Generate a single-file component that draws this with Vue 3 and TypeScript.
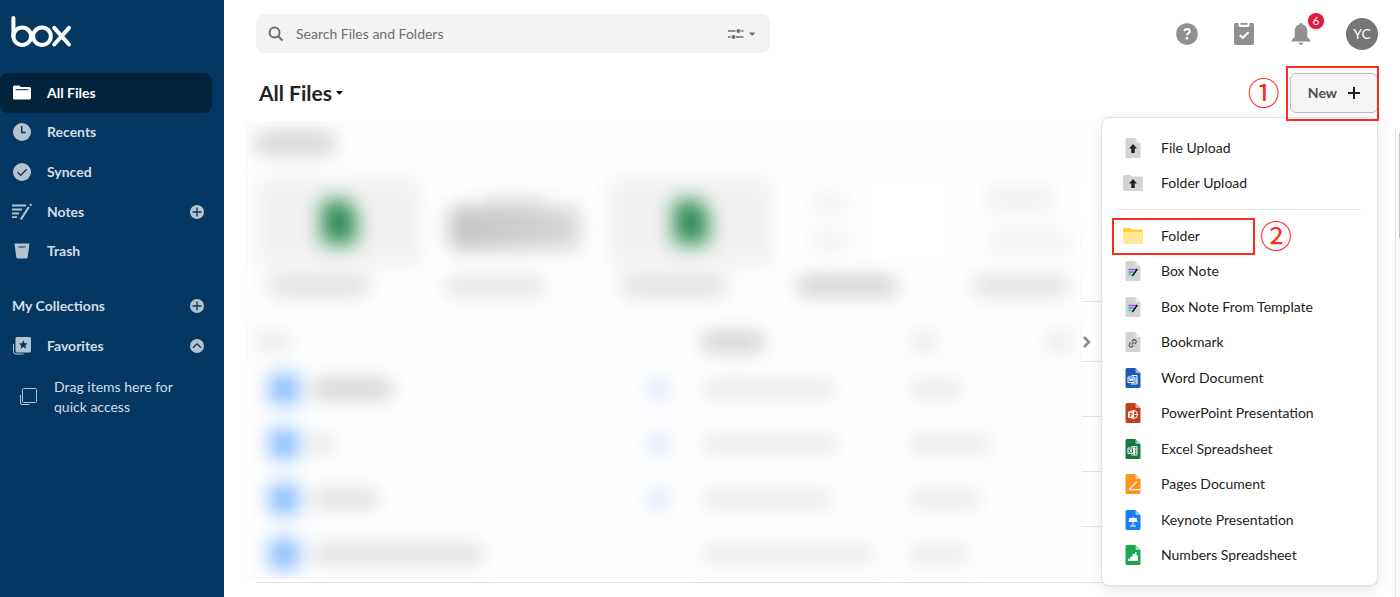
<script setup lang="ts">
import { ref } from 'vue'

interface NavItem {
  id: string
  label: string
  active?: boolean
  addable?: boolean
}

interface MenuItem {
  id: string
  label: string
  color?: string
}

const query = ref('')
const menuOpen = ref(true)
const favoritesOpen = ref(true)

const navItems: NavItem[] = [
  { id: 'files', label: 'All Files', active: true },
  { id: 'recents', label: 'Recents' },
  { id: 'synced', label: 'Synced' },
  { id: 'notes', label: 'Notes', addable: true },
  { id: 'trash', label: 'Trash' },
]

const uploadItems: MenuItem[] = [
  { id: 'file-upload', label: 'File Upload', color: '#d3d3d3' },
  { id: 'folder-upload', label: 'Folder Upload' },
]

const createItems: MenuItem[] = [
  { id: 'folder', label: 'Folder' },
  { id: 'note', label: 'Box Note', color: '#d3d3d3' },
  { id: 'note-template', label: 'Box Note From Template', color: '#d3d3d3' },
  { id: 'bookmark', label: 'Bookmark', color: '#d3d3d3' },
  { id: 'word', label: 'Word Document', color: '#185abd' },
  { id: 'powerpoint', label: 'PowerPoint Presentation', color: '#c43e1c' },
  { id: 'excel', label: 'Excel Spreadsheet', color: '#17793f' },
  { id: 'pages', label: 'Pages Document', color: '#ff9322' },
  { id: 'keynote', label: 'Keynote Presentation', color: '#147efb' },
  { id: 'numbers', label: 'Numbers Spreadsheet', color: '#1aa751' },
]

const menuGroups: MenuItem[][] = [uploadItems, createItems]

const cards = [
  { kind: 'sheet', label: 98, tone: '#d8d8d8' },
  { kind: 'photo', label: 98, tone: '#dedede' },
  { kind: 'sheet', label: 104, tone: '#d8d8d8' },
  { kind: 'page', label: 98, tone: '#c6c6c6' },
  { kind: 'chart', label: 94, tone: '#dadada' },
]

const rows = [
  { name: 78, tone: '#c8c8c8', synced: true, updated: 132, size: 52 },
  { name: 18, tone: '#dadada', synced: true, updated: 134, size: 80 },
  { name: 64, tone: '#d8d8d8', synced: true, updated: 128, size: 70 },
  { name: 170, tone: '#dadada', synced: false, updated: 170, size: 58 },
]
</script>

<template>
  <div class="app">
    <aside class="sidebar">
      <a class="logo" href="#" aria-label="Box">
        <svg width="62" height="33" viewBox="0 0 62 33" fill="none" stroke="#fff" stroke-width="4" stroke-linecap="round">
          <path d="M2.400 3v18" />
          <circle cx="11.200" cy="21.200" r="8.800" />
          <circle cx="31" cy="21.200" r="8.800" />
          <path d="M43.200 12.800 58 29.500M58 12.800 43.200 29.500" />
        </svg>
      </a>

      <nav class="nav" aria-label="Main">
        <div v-for="item in navItems" :key="item.id" class="nav-row" :class="{ active: item.active }">
          <a class="nav-link" href="#">
            <svg v-if="item.id === 'files'" width="20" height="20" viewBox="0 0 20 20">
              <path fill="currentColor" d="M1 4a1.500 1.500 0 0 1 1.500-1.500h4.800L9 4h8.500A1.500 1.500 0 0 1 19 5.500v9.500a1.500 1.500 0 0 1-1.500 1.500h-15A1.500 1.500 0 0 1 1 15z" />
              <path stroke="#02233c" stroke-linecap="round" d="M4 6.700h12" />
            </svg>
            <svg v-else-if="item.id === 'recents'" width="20" height="20" viewBox="0 0 20 20">
              <circle cx="10" cy="10" r="9" fill="currentColor" />
              <path fill="none" stroke="#043862" stroke-width="1.500" d="M9.700 4v6.500h4" />
            </svg>
            <svg v-else-if="item.id === 'synced'" width="20" height="20" viewBox="0 0 20 20">
              <circle cx="10" cy="10" r="9" fill="currentColor" />
              <path fill="none" stroke="#043862" stroke-width="1.300" d="m5.500 10.300 3.200 3 6-6" />
            </svg>
            <svg v-else-if="item.id === 'notes'" width="20" height="20" viewBox="0 0 20 20" fill="none" stroke="currentColor" stroke-width="1.800">
              <path d="M0 3.500h14M0 7.500h10M0 11.500h7M0 15.200h5" />
              <path stroke-width="2.200" d="m16.800 5-8 12.500M18.200 3.600l1-1.500" />
            </svg>
            <svg v-else width="20" height="20" viewBox="0 0 20 20">
              <path fill="currentColor" d="M2.500 2.500h15l-1.800 13.700a1.500 1.500 0 0 1-1.500 1.300H5.800a1.500 1.500 0 0 1-1.500-1.300z" />
              <path stroke="#043862" d="M6.500 6h7" />
            </svg>
            <span>{{ item.label }}</span>
          </a>
          <button v-if="item.addable" class="round" type="button" aria-label="Create note">
            <svg width="14" height="14" viewBox="0 0 14 14">
              <circle cx="7" cy="7" r="7" fill="currentColor" />
              <path stroke="#043862" stroke-width="1.300" d="M7 2.500v9M2.500 7h9" />
            </svg>
          </button>
        </div>
      </nav>

      <section class="collections">
        <div class="nav-row">
          <h2>My Collections</h2>
          <button class="round" type="button" aria-label="Add collection">
            <svg width="14" height="14" viewBox="0 0 14 14">
              <circle cx="7" cy="7" r="7" fill="currentColor" />
              <path stroke="#043862" stroke-width="1.300" d="M7 2.500v9M2.500 7h9" />
            </svg>
          </button>
        </div>
        <div class="nav-row">
          <a class="nav-link" href="#">
            <svg width="20" height="20" viewBox="0 0 20 20">
              <path fill="none" stroke="currentColor" d="M1.500 8v7.500A2.500 2.500 0 0 0 4 18h7.500" />
              <rect x="3.500" y="1" width="15.500" height="15.500" rx="1.500" fill="currentColor" />
              <path fill="#043862" d="m11.300 4.300 1.300 2.900 3.100.3-2.300 2.100.7 3.100-2.800-1.600-2.700 1.600.6-3.100-2.300-2.100 3.100-.3z" />
            </svg>
            <span>Favorites</span>
          </a>
          <button class="round" type="button" aria-label="Toggle favorites" @click="favoritesOpen = !favoritesOpen">
            <svg width="14" height="14" viewBox="0 0 14 14">
              <circle cx="7" cy="7" r="7" fill="currentColor" />
              <path fill="none" stroke="#043862" stroke-width="1.300" d="m3 8.800 4-4 4 4" />
            </svg>
          </button>
        </div>
        <p v-if="favoritesOpen" class="drop-hint">
          <svg width="20" height="20" viewBox="0 0 20 20" fill="none" stroke="currentColor">
            <rect x="4.500" y="1.500" width="14" height="14" rx="1" />
            <path d="M2.500 8v8A1.500 1.500 0 0 0 4 17.500h7.500" />
          </svg>
          <span>Drag items here for<br />quick access</span>
        </p>
      </section>
    </aside>

    <main class="main">
      <header class="topbar">
        <form class="search" role="search" @submit.prevent>
          <svg width="16" height="16" viewBox="0 0 16 16" fill="none" stroke="#6f6f6f" stroke-width="2">
            <circle cx="6.500" cy="6.500" r="5" />
            <path d="m10.200 10.200 4.300 4.300" />
          </svg>
          <input v-model="query" type="text" aria-label="Search Files and Folders" placeholder="Search Files and Folders" />
          <button class="filters" type="button" aria-label="Search filters">
            <svg width="28" height="12" viewBox="0 0 28 12" fill="#6f6f6f">
              <path fill="none" stroke="#6f6f6f" stroke-width="1.600" d="M0 3h7.500M13.500 3h2M0 9h2.500M8 9h7.500" />
              <circle cx="10.500" cy="3" r="2" />
              <circle cx="5.500" cy="9" r="2" />
              <path d="M21 4.500h6.500L24.200 8z" />
            </svg>
          </button>
        </form>

        <div class="tools">
          <button type="button" aria-label="Help">
            <svg width="22" height="22" viewBox="0 0 22 22">
              <circle cx="11" cy="11" r="10.800" fill="#909090" />
              <path fill="none" stroke="#fff" stroke-width="2" d="M8.200 8.200c.5-1.700 1.600-2.300 2.900-2.300 1.700 0 2.700.9 2.700 2.200 0 1.900-2.500 2.100-2.700 4.300" />
              <circle cx="11" cy="15.300" r="1.300" fill="#fff" />
            </svg>
          </button>
          <button type="button" aria-label="Tasks">
            <svg width="22" height="22" viewBox="0 0 22 22">
              <path fill="#909090" d="M2.500 0h3v2.500A1.500 1.500 0 0 0 7 4h8a1.500 1.500 0 0 0 1.500-1.500V0h3A1.500 1.500 0 0 1 21 1.500v18.500a2 2 0 0 1-2 2H3a2 2 0 0 1-2-2V1.500A1.500 1.500 0 0 1 2.500 0z" />
              <path fill="#909090" d="M7.500 0h7v1.800h-7z" />
              <path fill="none" stroke="#fff" stroke-width="2" d="m6.800 12 3 2.800 5.700-5.600" />
            </svg>
          </button>
          <button type="button" aria-label="Notifications">
            <svg width="22" height="22" viewBox="0 0 22 22" fill="#909090">
              <path d="M11 0c1 0 1.500.6 1.500 1.500 3 .7 4.800 3 4.800 6.200v6.500l3.200 3.300v1h-19v-1l3.200-3.300V7.700c0-3.200 1.800-5.500 4.800-6.200C9.500.6 10 0 11 0z" />
              <path d="M8.500 19.700h5c-.5 1.400-1.400 2-2.500 2s-2-.6-2.500-2z" />
            </svg>
            <span class="badge">6</span>
          </button>
          <button class="avatar" type="button" aria-label="Account">YC</button>
        </div>
      </header>

      <div class="heading">
        <h1>
          <button type="button">
            All Files
            <svg width="8" height="4" viewBox="0 0 8 4"><path d="M0 0h7L3.500 3.800z" /></svg>
          </button>
        </h1>
        <div class="new-wrap">
          <span class="callout callout-one">①</span>
          <button class="new" type="button" aria-haspopup="menu" :aria-expanded="menuOpen" @click="menuOpen = !menuOpen">
            New
            <svg width="14" height="14" viewBox="0 0 14 14" stroke="#222" stroke-width="2"><path d="M7 1v12M1 7h12" /></svg>
          </button>
          <span class="marker marker-new"></span>

          <div v-if="menuOpen" class="menu">
            <ul v-for="(group, g) in menuGroups" :key="g" role="menu" :class="g === 0 ? 'uploads' : 'creates'">
              <li v-for="item in group" :key="item.id" role="none">
                <button type="button" role="menuitem">
                  <svg v-if="item.color" width="20" height="20" viewBox="0 0 20 20">
                    <path :fill="item.color" d="M4 0h8.500l5 5v13.500a1.500 1.500 0 0 1-1.500 1.500H4a1.500 1.500 0 0 1-1.500-1.500v-17A1.500 1.500 0 0 1 4 0z" />
                    <path fill="#fff" fill-opacity=".55" d="m12.500 0 5 5h-4a1 1 0 0 1-1-1z" />
                    <path v-if="item.id === 'file-upload'" fill="#222" d="m10 6 4 4.500h-2.300V15H8.300v-4.500H6z" />
                    <template v-else-if="item.id === 'note' || item.id === 'note-template'">
                      <path stroke="#9f4bdb" stroke-width="1.400" d="M5.500 8.500h8" />
                      <path stroke="#2486fc" stroke-width="1.400" d="M5.500 11h5" />
                      <path stroke="#26c9c9" stroke-width="1.400" d="M5.500 13.500h3" />
                      <path stroke="#111" stroke-width="1.500" d="m14.300 8-5 7" />
                    </template>
                    <g v-else-if="item.id === 'bookmark'" fill="none" stroke="#444" stroke-width="1" transform="rotate(-45 9.500 11.500)">
                      <path d="M9 9.500H7.500a2 2 0 0 0 0 4H9M10.500 9.500H12a2 2 0 0 1 0 4h-1.500M8 11.500h3.500" />
                    </g>
                    <g v-else-if="item.id === 'word'" fill="none" stroke="#fff">
                      <path d="M8.500 7.500h5.500v8.500H8M11.500 10h2.500M11.500 12h2.500M11.500 14h2.500" />
                      <path fill="#185abd" d="M5 9h6v5.500H5z" />
                      <path d="m6.300 10 .8 3 1-2.500.9 2.500.9-3" />
                    </g>
                    <g v-else-if="item.id === 'powerpoint'" fill="none" stroke="#fff">
                      <circle cx="10.500" cy="11.500" r="4" />
                      <path d="M10.500 7.500v4h4" />
                      <path fill="#fff" d="M5.500 9h5v5.500h-5z" />
                      <path stroke="#c43e1c" d="M7.200 14v-4h1a1 1 0 0 1 0 2.200h-1" />
                    </g>
                    <g v-else-if="item.id === 'excel'" fill="none" stroke="#fff">
                      <path d="M8.500 7.500h5.500v8.500H8.500M11.500 7.500V16M8 10.200h6M8 13h6" />
                      <path fill="#17793f" d="M5 9h5.500v5.500H5z" />
                      <path d="m6.500 10 2.600 3.500M9.100 10l-2.600 3.500" />
                    </g>
                    <g v-else-if="item.id === 'pages'" fill="none" stroke="#fff">
                      <path stroke-width="1.200" d="m7 14.700 6.800-6.800M6 15.700h11.500" />
                      <path d="M6.200 15.500 7 14" />
                    </g>
                    <g v-else-if="item.id === 'keynote'" fill="#fff">
                      <path d="M6.300 8h7.400l.8 4h-9z" />
                      <path d="M9.500 7h1v9h-1zM7 15.500h6v1H7z" />
                    </g>
                    <path v-else-if="item.id === 'numbers'" fill="#fff" d="M5 13.700h2.200v-2h2.300V9h2.500V7h1.500v3.500H15V16H5z" />
                  </svg>
                  <svg v-else width="20" height="20" viewBox="0 0 20 20">
                    <template v-if="item.id === 'folder-upload'">
                      <path fill="#d3d3d3" d="M0 3.500A1.500 1.500 0 0 1 1.500 2h5.700L9 3.500h9.500A1.500 1.500 0 0 1 20 5v11.500a1.500 1.500 0 0 1-1.500 1.500h-17A1.500 1.500 0 0 1 0 16.500z" />
                      <path fill="#222" d="m10 6 4 4.500h-2.300V15H8.300v-4.500H6z" />
                    </template>
                    <template v-else>
                      <path fill="#fcd22f" d="M0 3.500A1.500 1.500 0 0 1 1.500 2h5.700L9 3.500h9.500A1.500 1.500 0 0 1 20 5v5H0z" />
                      <path fill="#ffe996" d="M0 7.500A1.500 1.500 0 0 1 1.500 6h17A1.500 1.500 0 0 1 20 7.500v9a1.500 1.500 0 0 1-1.500 1.500h-17A1.500 1.500 0 0 1 0 16.500z" />
                    </template>
                  </svg>
                  <span>{{ item.label }}</span>
                </button>
                <template v-if="item.id === 'folder'">
                  <span class="marker marker-folder"></span>
                  <span class="callout callout-two">②</span>
                </template>
              </li>
            </ul>
          </div>
        </div>
      </div>

      <div class="body">
        <div class="content">
          <div class="veil" aria-hidden="true">
            <div class="blurred">
              <div class="title-bar"></div>
              <div class="cards">
                <div v-for="(card, i) in cards" :key="i" class="card">
                  <div class="thumb" :class="card.kind"><i></i><b></b></div>
                  <div class="bar" :style="{ width: card.label + 'px', background: card.tone }"></div>
                </div>
              </div>
              <div class="row head">
                <div class="bar faint short"></div>
                <div></div>
                <div></div>
                <div class="bar strong"></div>
                <div class="bar faint tiny"></div>
                <div class="bar faint tiny"></div>
              </div>
              <div v-for="(row, i) in rows" :key="i" class="row">
                <div class="folder"></div>
                <div class="bar" :style="{ width: row.name + 'px', background: row.tone }"></div>
                <div :class="{ sync: row.synced }"></div>
                <div class="bar faint" :style="{ width: row.updated + 'px' }"></div>
                <div class="bar faint" :style="{ width: row.size + 'px' }"></div>
              </div>
            </div>
          </div>
          <div class="edge">
            <div class="edge-top"></div>
            <div class="edge-head">
              <svg width="10" height="14" viewBox="0 0 10 14" fill="none" stroke="#8a8a8a" stroke-width="2.500"><path d="m2 2 5 5-5 5" /></svg>
            </div>
            <div v-for="(row, i) in rows" :key="i" class="edge-row"></div>
          </div>
        </div>
        <div class="scrollbar"><div class="scroll-thumb"></div></div>
      </div>
    </main>
  </div>
</template>

<style>
body {
  margin: 0;
  background: #fff;
  overflow: hidden;
}
</style>

<style scoped>
* {
  box-sizing: border-box;
}

.app {
  display: flex;
  min-height: 100vh;
  font-family: Lato, 'Noto Sans CJK JP', sans-serif;
  font-size: 14px;
  line-height: 20px;
  color: #222;
}

button {
  padding: 0;
  border: 0;
  background: none;
  font: inherit;
  color: inherit;
  cursor: pointer;
}

svg {
  display: block;
  flex: none;
}

h1,
h2,
p,
ul {
  margin: 0;
  padding: 0;
}

.sidebar {
  flex: none;
  width: 224px;
  padding-top: 15px;
  background: #043862;
  color: #d3dce5;
}

.logo {
  display: block;
  height: 33px;
  margin: 0 0 25px 11px;
}

.nav {
  display: grid;
  grid-auto-rows: 1fr;
  height: 198px;
}

.nav-row {
  display: flex;
  align-items: center;
  justify-content: space-between;
  margin-right: 12px;
  padding: 0 8px 0 12px;
  font-weight: 700;
}

.nav-row.active {
  background: #02233c;
  border-radius: 8px;
  color: #fff;
}

.nav-link {
  display: flex;
  align-items: center;
  gap: 15px;
  color: inherit;
  text-decoration: none;
}

.nav-link svg,
.round {
  color: #b4c3d0;
}

.active .nav-link svg {
  color: #fff;
}

.collections {
  display: grid;
  grid-template-rows: 40px 39px auto;
  margin-top: 15px;
}

h2 {
  font-size: 14px;
  font-weight: 700;
}

.drop-hint {
  display: flex;
  align-items: center;
  gap: 16px;
  padding: 12px 18px;
}

.drop-hint svg {
  color: #b4c3d0;
}

.main {
  flex: 1;
  min-width: 0;
  display: flex;
  flex-direction: column;
}

.topbar {
  display: flex;
  justify-content: space-between;
  align-items: center;
  gap: 32px;
  padding: 14px 22px 0 32px;
}

.search {
  flex: 0 1 514px;
  display: flex;
  align-items: center;
  gap: 12px;
  height: 39px;
  padding: 0 14px 0 12px;
  border-radius: 8px;
  background: #f3f3f3;
}

.search input {
  flex: 1;
  min-width: 0;
  padding: 0;
  border: 0;
  outline: 0;
  background: none;
  font: inherit;
  color: #222;
}

.search input::placeholder {
  color: #6f6f6f;
  opacity: 1;
}

.tools {
  display: flex;
  align-items: center;
  gap: 25px;
}

.tools button {
  position: relative;
  display: flex;
  align-items: center;
  justify-content: center;
  width: 32px;
  height: 32px;
}

.tools .avatar {
  margin-left: 4px;
  border-radius: 50%;
  background: #767676;
  color: #fff;
}

.badge {
  position: absolute;
  top: -5px;
  right: -7px;
  width: 16px;
  height: 16px;
  border-radius: 50%;
  background: #e6173f;
  box-shadow: 0 1px 3px rgba(0, 0, 0, 0.2);
  color: #fff;
  font-size: 12px;
  line-height: 16px;
  text-align: center;
}

.heading {
  display: flex;
  align-items: center;
  justify-content: space-between;
  height: 68px;
  padding: 12px 22px 0 35px;
}

h1 {
  font-size: 21px;
  line-height: 28px;
  font-weight: 700;
}

h1 button {
  display: flex;
  align-items: center;
  gap: 4px;
}

.new-wrap {
  position: relative;
}

.new {
  display: flex;
  align-items: center;
  gap: 10px;
  height: 40px;
  padding: 0 16px 0 17px;
  border: 1px solid #bcbcbc;
  border-radius: 6px;
  background: #f5f5f5;
  color: #4e4e4e;
  font-weight: 700;
}

.marker {
  position: absolute;
  z-index: 3;
  border: 2px solid #ff2a1a;
  pointer-events: none;
}

.marker-new {
  inset: -7px -1px -8px -4px;
}

.marker-folder {
  inset: 0 122px -1px 10px;
}

.callout {
  position: absolute;
  color: #ff2a1a;
  font-family: 'Noto Sans CJK JP', sans-serif;
  font-size: 32px;
  font-weight: 400;
  line-height: 36px;
}

.callout-one {
  right: 100%;
  top: 0;
  margin-right: 10px;
}

.callout-two {
  left: 158px;
  top: -2px;
}

.menu {
  position: absolute;
  z-index: 2;
  top: 44px;
  right: 0;
  width: 277px;
  padding: 12px 0;
  border: 1px solid #e2e2e2;
  border-radius: 8px;
  background: #fff;
  box-shadow: 0 4px 12px rgba(0, 0, 0, 0.1);
}

.menu ul {
  display: grid;
  grid-auto-rows: 1fr;
  list-style: none;
}

.menu .uploads {
  height: 71px;
}

.menu .creates {
  position: relative;
  height: 355px;
  margin-top: 17px;
}

.creates::after {
  content: '';
  position: absolute;
  top: -9px;
  left: 16px;
  right: 16px;
  border-top: 1px solid #e2e2e2;
}

.menu li {
  position: relative;
  display: flex;
}

.menu li button {
  flex: 1;
  display: flex;
  align-items: center;
  gap: 18px;
  padding: 0 21px;
}

.body {
  flex: 1;
  display: flex;
}

.content {
  flex: 1;
  min-width: 0;
  display: flex;
  align-self: flex-start;
  margin-left: 22px;
  background: linear-gradient(#e2e2e2, #e2e2e2) 10px 100% / 100% 1px no-repeat;
}

.veil {
  flex: 1;
  min-width: 0;
  height: 458px;
  overflow: hidden;
}

.blurred {
  height: 480px;
  padding-left: 10px;
  background: #fdfdfd;
  filter: blur(10px);
}

.title-bar {
  width: 78px;
  height: 20px;
  background: #cfcfcf;
  transform: translateY(12px);
}

.cards {
  display: grid;
  grid-template-columns: repeat(5, 166px);
  gap: 10px;
  margin-top: 36px;
  height: 124px;
  overflow: hidden;
}

.thumb {
  display: flex;
  align-items: center;
  justify-content: center;
  height: 90px;
  background: #fff;
}

.sheet {
  background: #f1f1f1;
}

.sheet i {
  width: 34px;
  height: 44px;
  border-radius: 4px 16px 4px 4px;
  background: #2b8c52;
}

.photo {
  flex-direction: column;
}

.photo i {
  width: 60px;
  height: 12px;
  background: #e8e8e8;
}

.photo b {
  width: 132px;
  height: 44px;
  background: linear-gradient(90deg, #c2c2c2, #d8d8d8);
}

.page,
.chart {
  flex-direction: column;
  align-items: flex-start;
  gap: 14px;
  padding-left: 24px;
}

.page i,
.page b {
  width: 44px;
  height: 24px;
  background: #f2f2f2;
}

.chart i {
  width: 72px;
  height: 26px;
  background: #f0f0f0;
}

.chart b {
  width: 90px;
  height: 32px;
  background: #f2f5f4;
}

.bar {
  height: 16px;
  background: #dedede;
}

.card .bar {
  margin: 11px 0 0 14px;
}

.row {
  display: grid;
  grid-template-columns: 43px 335fr 55px 207fr 135fr 37px;
  align-items: center;
  height: 55px;
  padding-left: 14px;
}

.row.head {
  height: 38px;
  margin-top: 22px;
}

.row .faint {
  background: #e6e6e6;
}

.row .short {
  width: 36px;
  margin-left: -14px;
}

.row .strong {
  width: 60px;
  background: #c6c6c6;
}

.row .tiny {
  width: 28px;
}

.folder {
  width: 28px;
  height: 28px;
  border-radius: 4px;
  background: #78b4ff;
}

.sync {
  width: 20px;
  height: 20px;
  border-radius: 50%;
  background: #ccdeff;
}

.edge {
  flex: none;
  width: 296px;
  padding-bottom: 1px;
}

.edge > div {
  border-bottom: 1px solid #e2e2e2;
}

.edge > div:last-child {
  border-bottom: 0;
}

.edge-top {
  height: 181px;
}

.edge-head {
  display: flex;
  align-items: flex-end;
  height: 60px;
  padding-bottom: 12px;
}

.edge-row {
  height: 55px;
}

.scrollbar {
  flex: none;
  width: 5px;
  margin: 7px 0 0 17px;
  padding: 5px 0 0 3px;
  border-left: 1px solid #e6e6e6;
  background: #fafafa;
}

.scroll-thumb {
  height: 105px;
  background: #c1c1c1;
}
</style>
